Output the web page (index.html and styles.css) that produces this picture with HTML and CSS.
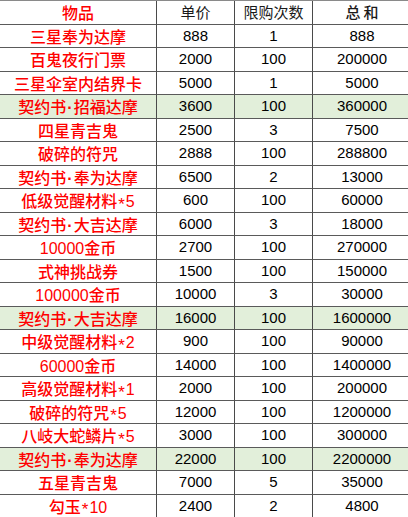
FILE: index.html
```html
<!DOCTYPE html>
<html lang="zh">
<head>
<meta charset="utf-8">
<title>物品价格表</title>
<link rel="stylesheet" href="styles.css">
</head>
<body>
<div class="sheet">
  <div class="row head">
    <div class="cell name">物品</div>
    <div class="cell">单价</div>
    <div class="cell">限购次数</div>
    <div class="cell brush">总和</div>
  </div>
  <div class="row"><div class="cell name">三星奉为达摩</div><div class="cell num">888</div><div class="cell num">1</div><div class="cell num">888</div></div>
  <div class="row"><div class="cell name">百鬼夜行门票</div><div class="cell num">2000</div><div class="cell num">100</div><div class="cell num">200000</div></div>
  <div class="row"><div class="cell name">三星伞室内结界卡</div><div class="cell num">5000</div><div class="cell num">1</div><div class="cell num">5000</div></div>
  <div class="row green"><div class="cell name">契约书<span class="dot">·</span>招福达摩</div><div class="cell num">3600</div><div class="cell num">100</div><div class="cell num">360000</div></div>
  <div class="row"><div class="cell name">四星青吉鬼</div><div class="cell num">2500</div><div class="cell num">3</div><div class="cell num">7500</div></div>
  <div class="row"><div class="cell name">破碎的符咒</div><div class="cell num">2888</div><div class="cell num">100</div><div class="cell num">288800</div></div>
  <div class="row"><div class="cell name">契约书<span class="dot">·</span>奉为达摩</div><div class="cell num">6500</div><div class="cell num">2</div><div class="cell num">13000</div></div>
  <div class="row"><div class="cell name">低级觉醒材料<span class="lat"><span class="ast">*</span>5</span></div><div class="cell num">600</div><div class="cell num">100</div><div class="cell num">60000</div></div>
  <div class="row"><div class="cell name">契约书<span class="dot">·</span>大吉达摩</div><div class="cell num">6000</div><div class="cell num">3</div><div class="cell num">18000</div></div>
  <div class="row"><div class="cell name"><span class="lat">10000</span>金币</div><div class="cell num">2700</div><div class="cell num">100</div><div class="cell num">270000</div></div>
  <div class="row"><div class="cell name">式神挑战券</div><div class="cell num">1500</div><div class="cell num">100</div><div class="cell num">150000</div></div>
  <div class="row"><div class="cell name"><span class="lat">100000</span>金币</div><div class="cell num">10000</div><div class="cell num">3</div><div class="cell num">30000</div></div>
  <div class="row green"><div class="cell name">契约书<span class="dot">·</span>大吉达摩</div><div class="cell num">16000</div><div class="cell num">100</div><div class="cell num">1600000</div></div>
  <div class="row"><div class="cell name">中级觉醒材料<span class="lat"><span class="ast">*</span>2</span></div><div class="cell num">900</div><div class="cell num">100</div><div class="cell num">90000</div></div>
  <div class="row"><div class="cell name"><span class="lat">60000</span>金币</div><div class="cell num">14000</div><div class="cell num">100</div><div class="cell num">1400000</div></div>
  <div class="row"><div class="cell name">高级觉醒材料<span class="lat"><span class="ast">*</span>1</span></div><div class="cell num">2000</div><div class="cell num">100</div><div class="cell num">200000</div></div>
  <div class="row"><div class="cell name">破碎的符咒<span class="lat"><span class="ast">*</span>5</span></div><div class="cell num">12000</div><div class="cell num">100</div><div class="cell num">1200000</div></div>
  <div class="row"><div class="cell name">八岐大蛇鳞片<span class="lat"><span class="ast">*</span>5</span></div><div class="cell num">3000</div><div class="cell num">100</div><div class="cell num">300000</div></div>
  <div class="row green"><div class="cell name">契约书<span class="dot">·</span>奉为达摩</div><div class="cell num">22000</div><div class="cell num">100</div><div class="cell num">2200000</div></div>
  <div class="row"><div class="cell name">五星青吉鬼</div><div class="cell num">7000</div><div class="cell num">5</div><div class="cell num">35000</div></div>
  <div class="row"><div class="cell name">勾玉<span class="lat"><span class="ast">*</span>10</span></div><div class="cell num">2400</div><div class="cell num">2</div><div class="cell num">4800</div></div>
</div>
</body>
</html>
```

FILE: styles.css
```css
html, body {
  margin: 0;
  padding: 0;
  background: #ffffff;
  overflow: hidden;
}

.sheet {
  width: 412px;
  border-top: 1px solid #8a8a8a;
  font-family: "Liberation Sans", Arial, "Noto Sans CJK SC", sans-serif;
  color: #000000;
}

.row {
  display: grid;
  grid-template-columns: 157px 78px 78px 99px;
  height: 23.5px;
}

.row.green {
  background: #e2efda;
}

.cell {
  box-sizing: border-box;
  border-right: 1px solid #4a4a4a;
  border-bottom: 1px solid #5a5a5a;
  text-align: center;
  line-height: 22px;
  font-size: 15px;
  white-space: nowrap;
  overflow: hidden;
}

.head .cell {
  font-family: "Noto Sans CJK SC", sans-serif;
  font-size: 15px;
  color: #1a1a1a;
}

.cell.name,
.head .cell.name {
  font-family: "Noto Sans CJK SC", sans-serif;
  font-weight: 500;
  font-size: 16px;
  color: #ff0000;
}

.cell.name .lat {
  font-family: "Liberation Sans", Arial, sans-serif;
  font-size: 16px;
  font-weight: 400;
}

.cell.name .ast {
  display: inline-block;
  line-height: 10px;
  vertical-align: -0.15em;
  font-size: 17px;
  margin: 0 1px;
}

.cell.name .dot {
  font-family: "Liberation Sans", Arial, sans-serif;
  font-weight: 700;
  margin: 0 1px;
}

.head .cell.brush {
  font-weight: 500;
  letter-spacing: 3px;
  padding-left: 3px;
}

.cell.num {
  font-family: "Liberation Sans", Arial, sans-serif;
  font-size: 15px;
  color: #000000;
}
```
